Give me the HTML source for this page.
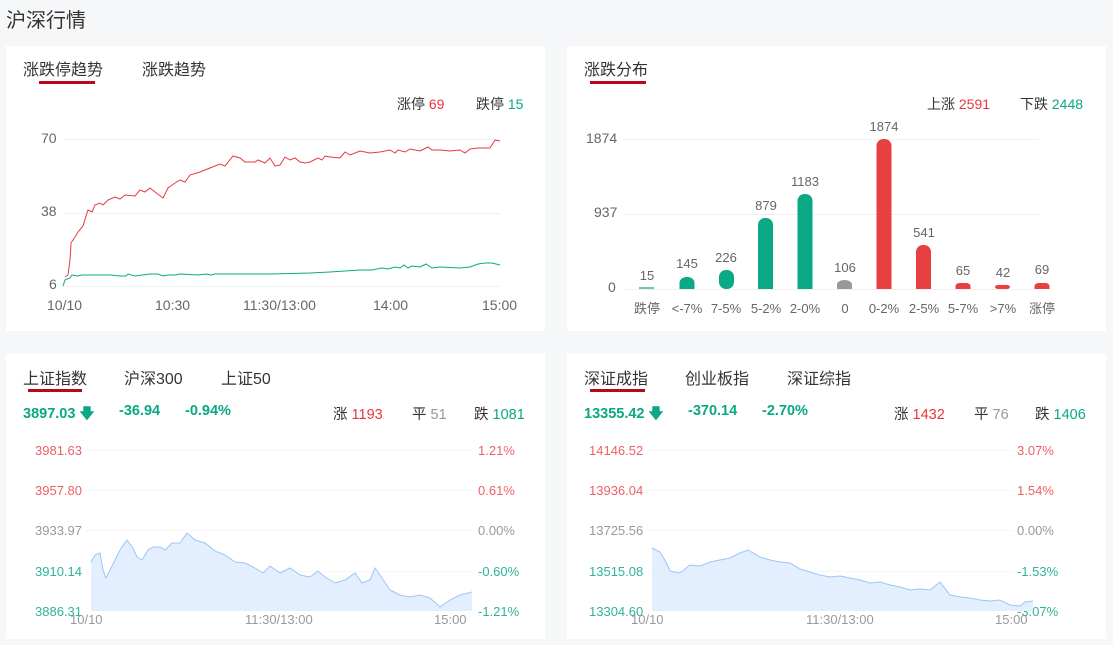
<!DOCTYPE html>
<html><head><meta charset="utf-8"><style>
*{margin:0;padding:0;box-sizing:border-box}
body{width:1113px;height:645px;background:#f6f7f9;font-family:"Liberation Sans","Noto Sans CJK SC",sans-serif;position:relative;overflow:hidden;color:#333}
.t{position:absolute;white-space:nowrap}
.p{position:absolute;background:#fff}
.g{color:#0aa884}.r{color:#e8383d}.gr{color:#999}
.n{font-size:14.5px}
.s{font-size:13px}
svg{position:absolute;left:0;top:0}
</style></head><body>
<div class="t" style="left:6px;top:4px;font-size:20px;color:#333">沪深行情</div>
<div class="p" style="left:6px;top:46px;width:539px;height:285px"></div>
<div class="p" style="left:567px;top:46px;width:539px;height:285px"></div>
<div class="p" style="left:6px;top:354px;width:539px;height:285px"></div>
<div class="p" style="left:567px;top:354px;width:539px;height:285px"></div>

<div class="t" style="left:23px;top:56px;font-size:16px">涨跌停趋势</div>
<div class="t" style="left:142px;top:56px;font-size:16px">涨跌趋势</div>
<div class="t" style="left:397px;top:94px;font-size:14px">涨停 <span class="r">69</span></div>
<div class="t" style="left:476px;top:94px;font-size:14px">跌停 <span class="g">15</span></div>
<div class="t" style="left:41px;top:130px;font-size:14px;color:#666">70</div>
<div class="t" style="left:41px;top:203px;font-size:14px;color:#666">38</div>
<div class="t" style="left:49px;top:276px;font-size:14px;color:#666">6</div>
<div class="t" style="left:47px;top:297px;font-size:14px;color:#666">10/10</div>
<div class="t" style="left:155px;top:297px;font-size:14px;color:#666">10:30</div>
<div class="t" style="left:243px;top:297px;font-size:14px;color:#666">11:30/13:00</div>
<div class="t" style="left:373px;top:297px;font-size:14px;color:#666">14:00</div>
<div class="t" style="left:482px;top:297px;font-size:14px;color:#666">15:00</div>

<div class="t" style="left:584px;top:56px;font-size:16px">涨跌分布</div>
<div class="t" style="left:927px;top:94px;font-size:14px">上涨 <span class="r">2591</span></div>
<div class="t" style="left:1020px;top:94px;font-size:14px">下跌 <span class="g">2448</span></div>
<div class="t" style="left:586px;top:130px;font-size:14px;color:#666">1874</div>
<div class="t" style="left:594px;top:204px;font-size:14px;color:#666">937</div>
<div class="t" style="left:608px;top:279px;font-size:14px;color:#666">0</div>

<div class="t" style="left:23px;top:365px;font-size:16px">上证指数</div>
<div class="t" style="left:124px;top:365px;font-size:16px">沪深300</div>
<div class="t" style="left:221px;top:365px;font-size:16px">上证50</div>
<div class="t g n" style="left:23px;top:403px;font-weight:bold">3897.03 🡇</div>
<div class="t g n" style="left:119px;top:403px;font-weight:bold">-36.94</div>
<div class="t g n" style="left:185px;top:403px;font-weight:bold">-0.94%</div>
<div class="t n" style="left:333px;top:403px">涨 <span class="r">1193</span></div>
<div class="t n" style="left:412px;top:403px">平 <span class="gr">51</span></div>
<div class="t n" style="left:474px;top:403px">跌 <span class="g">1081</span></div>
<div class="t r s" style="left:35px;top:443px;opacity:.8">3981.63</div>
<div class="t r s" style="left:35px;top:483px;opacity:.8">3957.80</div>
<div class="t gr s" style="left:35px;top:523px">3933.97</div>
<div class="t g s" style="left:35px;top:564px;opacity:.85">3910.14</div>
<div class="t g s" style="left:35px;top:604px;opacity:.85">3886.31</div>
<div class="t r s" style="left:478px;top:443px;opacity:.8">1.21%</div>
<div class="t r s" style="left:478px;top:483px;opacity:.8">0.61%</div>
<div class="t gr s" style="left:478px;top:523px">0.00%</div>
<div class="t g s" style="left:478px;top:564px;opacity:.85">-0.60%</div>
<div class="t g s" style="left:478px;top:604px;opacity:.85">-1.21%</div>
<div class="t gr s" style="left:70px;top:612px">10/10</div>
<div class="t gr s" style="left:245px;top:612px">11:30/13:00</div>
<div class="t gr s" style="left:434px;top:612px">15:00</div>

<div class="t" style="left:584px;top:365px;font-size:16px">深证成指</div>
<div class="t" style="left:685px;top:365px;font-size:16px">创业板指</div>
<div class="t" style="left:787px;top:365px;font-size:16px">深证综指</div>
<div class="t g n" style="left:584px;top:403px;font-weight:bold">13355.42 🡇</div>
<div class="t g n" style="left:688px;top:403px;font-weight:bold">-370.14</div>
<div class="t g n" style="left:762px;top:403px;font-weight:bold">-2.70%</div>
<div class="t n" style="left:894px;top:403px">涨 <span class="r">1432</span></div>
<div class="t n" style="left:974px;top:403px">平 <span class="gr">76</span></div>
<div class="t n" style="left:1035px;top:403px">跌 <span class="g">1406</span></div>
<div class="t r s" style="left:589px;top:443px;opacity:.8">14146.52</div>
<div class="t r s" style="left:589px;top:483px;opacity:.8">13936.04</div>
<div class="t gr s" style="left:589px;top:523px">13725.56</div>
<div class="t g s" style="left:589px;top:564px;opacity:.85">13515.08</div>
<div class="t g s" style="left:589px;top:604px;opacity:.85">13304.60</div>
<div class="t r s" style="left:1017px;top:443px;opacity:.8">3.07%</div>
<div class="t r s" style="left:1017px;top:483px;opacity:.8">1.54%</div>
<div class="t gr s" style="left:1017px;top:523px">0.00%</div>
<div class="t g s" style="left:1017px;top:564px;opacity:.85">-1.53%</div>
<div class="t g s" style="left:1017px;top:604px;opacity:.85">-3.07%</div>
<div class="t gr s" style="left:631px;top:612px">10/10</div>
<div class="t gr s" style="left:806px;top:612px">11:30/13:00</div>
<div class="t gr s" style="left:995px;top:612px">15:00</div>

<svg width="1113" height="645" viewBox="0 0 1113 645">
<g fill="#b8091c">
<rect x="39" y="81" width="56" height="3"/><rect x="590" y="81" width="56" height="3"/>
<rect x="28" y="389" width="54" height="3"/><rect x="590" y="389" width="55" height="3"/>
</g>
<g stroke="#f0f0f0" stroke-width="1">
<line x1="63" y1="139.5" x2="500" y2="139.5"/><line x1="63" y1="213.5" x2="500" y2="213.5"/><line x1="63" y1="286.5" x2="500" y2="286.5"/>
<line x1="624" y1="139.5" x2="1039" y2="139.5"/><line x1="624" y1="214.5" x2="1039" y2="214.5"/><line x1="624" y1="289.5" x2="1039" y2="289.5"/>
</g>
<g stroke="#f7f7f7" stroke-width="1">
<line x1="86" y1="450.5" x2="472" y2="450.5"/><line x1="86" y1="490.5" x2="472" y2="490.5"/><line x1="86" y1="530.5" x2="472" y2="530.5"/><line x1="86" y1="571.5" x2="472" y2="571.5"/>
<line x1="647" y1="450.5" x2="1013" y2="450.5"/><line x1="647" y1="490.5" x2="1013" y2="490.5"/><line x1="647" y1="530.5" x2="1013" y2="530.5"/><line x1="647" y1="571.5" x2="1013" y2="571.5"/>
</g>
<polyline fill="none" stroke="#e8383d" stroke-width="1" points="65,277 68,275 70,260 71,243 75,237 78,232 83,226 86,216 88,210 92,212 95,205 100,203 103,205 108,200 115,197 120,199 125,195 135,196 140,190 145,192 150,188 155,192 163,198 168,188 175,183 180,180 185,182 190,175 200,172 210,168 220,164 225,166 233,156 240,158 245,162 255,162 258,160 265,163 270,158 275,166 280,165 285,157 290,160 295,158 300,162 305,163 310,162 318,158 322,160 325,156 330,157 340,158 345,152 350,155 360,151 370,153 380,152 390,150 395,153 398,150 405,152 410,149 420,151 428,147 432,150 440,150 450,151 460,150 465,153 470,149 478,148 490,148 495,140 500,141"/>
<polyline fill="none" stroke="#0aa884" stroke-width="1" points="63,286 65,280 70,278 72,275 78,276 82,275 90,275 95,275 110,275 120,276 126,276 128,274 135,276 150,274 158,274 163,276 168,275 175,275 180,274 198,275 206,274 211,275 215,274 270,274 310,273 330,272 345,271 360,270 372,270 382,268 388,269 395,267 400,268 404,265 408,268 412,266 420,267 426,264 432,268 440,267 460,268 470,267 478,264 485,263 492,263 500,265"/>
<g>
<path d="M639,289 v-2 h15 v2z" fill="#6ac8b4"/>
<rect x="679.5" y="277" width="15" height="12" rx="7" fill="#0aa884"/><rect x="679.5" y="283" width="15" height="6" fill="#0aa884"/>
<rect x="719" y="270" width="15" height="19" rx="7" fill="#0aa884"/>
<rect x="758" y="218" width="15" height="71" rx="7" fill="#0aa884"/><rect x="758" y="230" width="15" height="59" fill="#0aa884"/>
<rect x="797.5" y="194" width="15" height="95" rx="7" fill="#0aa884"/><rect x="797.5" y="205" width="15" height="84" fill="#0aa884"/>
<rect x="837" y="280" width="15" height="9" rx="7" fill="#999"/><rect x="837" y="284" width="15" height="5" fill="#999"/>
<rect x="876.5" y="139" width="15" height="150" rx="7" fill="#e84040"/><rect x="876.5" y="150" width="15" height="139" fill="#e84040"/>
<rect x="916" y="245" width="15" height="44" rx="7" fill="#e84040"/><rect x="916" y="255" width="15" height="34" fill="#e84040"/>
<rect x="955.5" y="283" width="15" height="6" rx="4" fill="#e84040"/><rect x="955.5" y="286" width="15" height="3" fill="#e84040"/>
<rect x="995" y="285" width="15" height="4" rx="3" fill="#e84040"/>
<rect x="1034.5" y="283" width="15" height="6" rx="4" fill="#e84040"/><rect x="1034.5" y="286" width="15" height="3" fill="#e84040"/>
</g>
<g font-family="Liberation Sans,sans-serif" font-size="13" fill="#666" text-anchor="middle">
<text x="647" y="280">15</text><text x="687" y="268">145</text><text x="726" y="262">226</text><text x="766" y="210">879</text><text x="805" y="186">1183</text><text x="845" y="272">106</text><text x="884" y="131">1874</text><text x="924" y="237">541</text><text x="963" y="275">65</text><text x="1003" y="277">42</text><text x="1042" y="274">69</text>
</g>
<g font-family="Liberation Sans,Noto Sans CJK SC,sans-serif" font-size="13" fill="#666" text-anchor="middle">
<text x="647" y="313">跌停</text><text x="687" y="313">&lt;-7%</text><text x="726" y="313">7-5%</text><text x="766" y="313">5-2%</text><text x="805" y="313">2-0%</text><text x="845" y="313">0</text><text x="884" y="313">0-2%</text><text x="924" y="313">2-5%</text><text x="963" y="313">5-7%</text><text x="1003" y="313">&gt;7%</text><text x="1042" y="313">涨停</text>
</g>
<polygon fill="#e3efff" stroke="none" points="91,611 91,562 95,555 100,553 103,570 106,578 110,570 120,550 127,540 133,548 137,557 142,560 148,550 153,547 160,547 165,550 172,543 180,543 187,533 195,540 205,543 215,551 225,555 235,562 245,563 255,568 263,573 270,566 280,573 290,568 300,575 310,577 318,571 325,577 335,583 345,580 355,573 362,583 370,580 375,568 380,575 390,590 400,595 410,597 420,595 430,598 440,607 450,600 460,595 472,592 472,611"/>
<polyline fill="none" stroke="#9cc5f5" stroke-width="1" points="91,562 95,555 100,553 103,570 106,578 110,570 120,550 127,540 133,548 137,557 142,560 148,550 153,547 160,547 165,550 172,543 180,543 187,533 195,540 205,543 215,551 225,555 235,562 245,563 255,568 263,573 270,566 280,573 290,568 300,575 310,577 318,571 325,577 335,583 345,580 355,573 362,583 370,580 375,568 380,575 390,590 400,595 410,597 420,595 430,598 440,607 450,600 460,595 472,592"/>
<polygon fill="#e3efff" points="652,611 652,548 660,552 666,562 670,571 680,573 690,565 700,566 710,562 720,560 730,558 740,553 748,550 760,557 770,560 780,562 790,563 800,569 810,572 820,575 830,577 840,576 850,578 860,580 870,583 880,582 890,585 900,587 910,590 920,589 930,590 940,582 950,595 960,597 970,598 980,600 990,601 1000,600 1010,605 1020,606 1025,602 1033,601 1033,611"/>
<polyline fill="none" stroke="#9cc5f5" stroke-width="1" points="652,548 660,552 666,562 670,571 680,573 690,565 700,566 710,562 720,560 730,558 740,553 748,550 760,557 770,560 780,562 790,563 800,569 810,572 820,575 830,577 840,576 850,578 860,580 870,583 880,582 890,585 900,587 910,590 920,589 930,590 940,582 950,595 960,597 970,598 980,600 990,601 1000,600 1010,605 1020,606 1025,602 1033,601"/>
</svg>
</body></html>
